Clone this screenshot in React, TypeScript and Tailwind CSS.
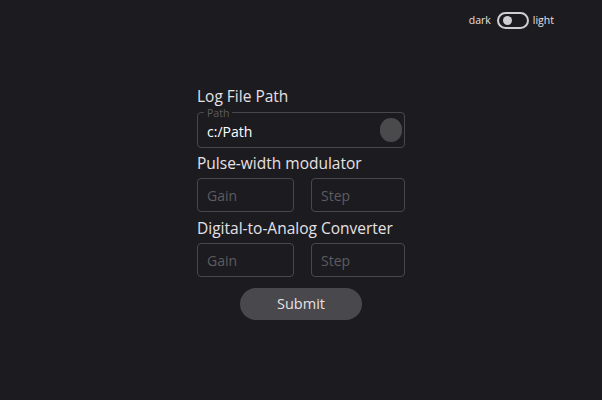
import { useState } from "react";

function NumberField({ placeholder }: { placeholder: string }) {
  return (
    <input
      placeholder={placeholder}
      className="h-[34px] w-full rounded-[4px] border border-[#48474b] bg-transparent px-[9px] text-[14px] text-white placeholder:text-[#5d5c60] outline-none"
    />
  );
}

export default function App() {
  const [light, setLight] = useState(false);
  const [path, setPath] = useState("c:/Path");

  return (
    <div
      className="flex h-[400px] w-full flex-col bg-[#1c1b1f] text-[#e6e1e5]"
      style={{ fontFamily: '"Open Sans", "Noto Sans", sans-serif' }}
    >
      {/* theme toggle */}
      <div className="flex justify-end pr-[48px] pt-[12px]">
        <div className="flex items-center text-[10.5px] text-[#e6e1e5]">
          <span>dark</span>
          <button
            onClick={() => setLight(!light)}
            className="ml-[6px] mr-[4px] flex h-[17px] w-[32px] items-center rounded-full border-2 border-[#cfcfd1] px-[4px]"
          >
            <span
              className={
                "h-[9px] w-[9px] rounded-full bg-[#cfcfd1] " + (light ? "ml-auto" : "")
              }
            />
          </button>
          <span>light</span>
        </div>
      </div>

      {/* form */}
      <div className="mx-auto mt-[58px] flex w-[208px] flex-col">
        <h2 className="text-[15.5px] leading-[18px]">Log File Path</h2>
        <div className="relative mt-[7px] flex h-[36px] items-center rounded-[4px] border border-[#48474b] pl-[9px] pr-[2px]">
          <span className="absolute left-[6px] top-[-5px] bg-[#1c1b1f] px-[3px] text-[10.5px] leading-[10px] text-[#5d5c60]">
            Path
          </span>
          <input
            value={path}
            onChange={(e) => setPath(e.target.value)}
            className="min-w-0 flex-1 bg-transparent pt-[2px] text-[14px] text-white outline-none"
          />
          <button className="h-[24px] w-[22px] rounded-full bg-[#4a4a4c]" />
        </div>

        <h2 className="mt-[4px] text-[15.5px] leading-[22px]">Pulse-width modulator</h2>
        <div className="mt-[4px] grid grid-cols-[97px_94px] gap-[17px]">
          <NumberField placeholder="Gain" />
          <NumberField placeholder="Step" />
        </div>

        <h2 className="mt-[5px] text-[15.5px] leading-[22px]">Digital-to-Analog Converter</h2>
        <div className="mt-[4px] grid grid-cols-[97px_94px] gap-[17px]">
          <NumberField placeholder="Gain" />
          <NumberField placeholder="Step" />
        </div>

        <button className="mx-auto mt-[11px] h-[32px] w-[122px] rounded-full bg-[#49484c] text-[14.5px] text-[#e6e1e5]">
          Submit
        </button>
      </div>
    </div>
  );
}
